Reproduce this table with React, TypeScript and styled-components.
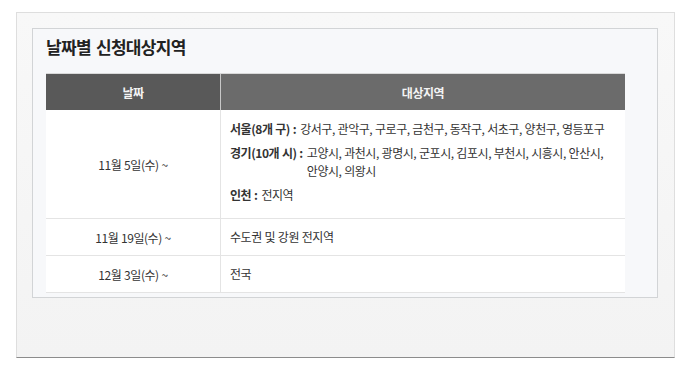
import React from 'react'
import styled, { createGlobalStyle } from 'styled-components'

const FONT = `'Noto Sans CJK KR', 'Noto Sans', sans-serif`

const GlobalStyle = createGlobalStyle`
  html, body {
    margin: 0;
    padding: 0;
    background: #ffffff;
  }
  body {
    font-family: ${FONT};
    color: #333333;
  }
`

type Region = {
  label: string
  value: string
}

type Schedule = {
  date: string
  regions?: Region[]
  text?: string
}

const SCHEDULES: Schedule[] = [
  {
    date: '11월 5일(수) ~',
    regions: [
      { label: '서울(8개 구) :', value: '강서구, 관악구, 구로구, 금천구, 동작구, 서초구, 양천구, 영등포구' },
      { label: '경기(10개 시) :', value: '고양시, 과천시, 광명시, 군포시, 김포시, 부천시, 시흥시, 안산시, 안양시, 의왕시' },
      { label: '인천 :', value: '전지역' },
    ],
  },
  { date: '11월 19일(수) ~', text: '수도권 및 강원 전지역' },
  { date: '12월 3일(수) ~', text: '전국' },
]

const App: React.FC = () => {
  return (
    <>
      <GlobalStyle />
      <Page>
        <Paper>
          <Panel>
            <Title>날짜별 신청대상지역</Title>
            <Table>
              <HeadRow>
                <HeadCell $dark>날짜</HeadCell>
                <HeadCell>대상지역</HeadCell>
              </HeadRow>
              {SCHEDULES.map(item => (
                <Row key={item.date}>
                  <DateCell>{item.date}</DateCell>
                  {item.regions ? (
                    <RegionCell $tall>
                      {item.regions.map(region => (
                        <RegionLine key={region.label}>
                          <RegionLabel>{region.label}</RegionLabel>
                          <RegionValue>{region.value}</RegionValue>
                        </RegionLine>
                      ))}
                    </RegionCell>
                  ) : (
                    <RegionCell>{item.text}</RegionCell>
                  )}
                </Row>
              ))}
            </Table>
          </Panel>
        </Paper>
      </Page>
    </>
  )
}

export default App

const Page = styled.div`
  padding: 12px 0 0 16px;
`

const Paper = styled.div`
  box-sizing: border-box;
  width: 659px;
  height: 346px;
  padding: 15px;
  border: 1px solid #dedede;
  border-bottom: 1px solid #8c8c8c;
  background-color: #f5f5f5;
  background-image: linear-gradient(180deg, #f8f8f8 0%, #f3f3f3 100%);
`

const Panel = styled.div`
  box-sizing: border-box;
  width: 626px;
  height: 270px;
  padding: 6px 0 0 13px;
  border: 1px solid #d2d4d6;
  background: #f7f8fa;
`

const Title = styled.h2`
  margin: 0 0 14px;
  font-size: 17px;
  line-height: 24px;
  font-weight: 700;
  letter-spacing: -0.7px;
  word-spacing: 2px;
  color: #222222;
`

const Table = styled.div`
  width: 579px;
  background: #ffffff;
  font-size: 12px;
  letter-spacing: -0.45px;
  word-spacing: 0.5px;
  word-break: keep-all;
`

const HeadRow = styled.div`
  display: grid;
  grid-template-columns: 174px 1fr;
  height: 36px;
  border-top: 1px solid #d9d9d9;
`

const HeadCell = styled.div<{ $dark?: boolean }>`
  display: flex;
  align-items: center;
  justify-content: center;
  background: ${p => (p.$dark ? '#595959' : '#6b6b6b')};
  border-left: ${p => (p.$dark ? 'none' : '1px solid #c8c8c8')};
  color: #f4f4f4;
  font-weight: 700;
`

const Row = styled.div`
  display: grid;
  grid-template-columns: 174px 1fr;
  border-bottom: 1px solid #e4e4e4;
`

const DateCell = styled.div`
  display: flex;
  align-items: center;
  justify-content: center;
  min-height: 36px;
  color: #333333;
`

const RegionCell = styled.div<{ $tall?: boolean }>`
  display: flex;
  flex-direction: column;
  justify-content: center;
  gap: 6px;
  min-height: 36px;
  padding: ${p => (p.$tall ? '10px 10px 14px 9px' : '0 10px 0 9px')};
  border-left: 1px solid #e4e4e4;
  line-height: 18px;
  color: #333333;
`

const RegionLine = styled.div`
  display: flex;
  align-items: flex-start;
`

const RegionLabel = styled.span`
  flex: none;
  margin-right: 4px;
  font-weight: 700;
  color: #333333;
`

const RegionValue = styled.span`
  flex: 1;
`
